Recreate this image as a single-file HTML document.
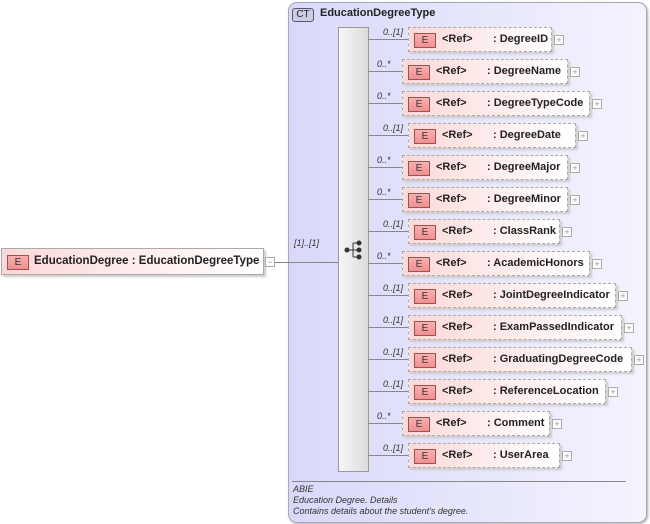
<!DOCTYPE html>
<html><head><style>
body{margin:0;width:650px;height:524px;background:#fff;position:relative;font-family:"Liberation Sans",sans-serif;overflow:hidden}
.a{position:absolute}
.ct{left:288px;top:2px;width:357px;height:519px;border:1px solid #a8a8b8;border-radius:9px;background:linear-gradient(90deg,#d8d8fa,#f4f4fe);box-shadow:1px 1px 2px #aaa}
.seq{left:338px;top:27px;width:29px;height:443px;background:linear-gradient(90deg,#f6f6f6,#dcdcdc);border:1px solid #999}
.box{height:23px;border:1px dashed #aaa;background:linear-gradient(90deg,#fcd8d8,#fff);box-shadow:2px 2px 2px #ccc;font-size:11px;font-weight:bold;color:#222;box-sizing:border-box;height:25px}
.e{position:absolute;left:5px;top:5px;width:20px;height:13px;border:1px solid #a05050;background:linear-gradient(#f8b0b0,#f09090);font-size:10px;font-weight:normal;text-align:center;line-height:13px;color:#333}
.r{position:absolute;left:33px;top:5px}
.n{position:absolute;top:5px;white-space:nowrap}
.pl{width:8px;height:8px;border:1px solid #aaa;background:#fff;font-size:9px;line-height:8px;text-align:center;color:#999}
.m{font-size:9px;font-style:italic;color:#333}
.ln{height:1px;background:#888}
</style></head><body>
<div class="a ct"></div>
<div class="a" style="left:292px;top:8px;width:20px;height:12px;border:1px solid #557;border-radius:3px;background:#ccd;font-size:10px;text-align:center;line-height:12px;color:#224">CT</div>
<div class="a" style="left:320px;top:7px;font-size:11px;font-weight:bold;color:#222">EducationDegreeType</div>
<div class="a seq"></div>
<svg class="a" style="left:344px;top:240px" width="20" height="20"><g stroke="#333" fill="#333"><line x1="2" y1="10" x2="9" y2="10"/><line x1="9" y1="3" x2="9" y2="17"/><line x1="9" y1="3" x2="15" y2="3"/><line x1="9" y1="10" x2="15" y2="10"/><line x1="9" y1="17" x2="15" y2="17"/><circle cx="3" cy="10" r="2"/><circle cx="15" cy="3" r="2"/><circle cx="15" cy="10" r="2"/><circle cx="15" cy="17" r="2"/></g></svg>
<div class="a box" style="left:1px;top:248px;width:263px;height:27px;border:1px solid #aaa"><div class="e" style="top:6px">E</div><div class="n" style="left:32px;top:6px;font-size:11.5px">EducationDegree : EducationDegreeType</div></div>
<div class="a pl" style="left:265px;top:257px">−</div>
<div class="a ln" style="left:275px;top:262px;width:63px"></div>
<div class="a m" style="left:294px;top:238px">[1]..[1]</div>
<div id="rows"></div>
<div class="a ln" style="left:292px;top:481px;width:334px"></div>
<div class="a m" style="left:293px;top:484px;line-height:11px">ABIE<br>Education Degree. Details<br>Contains details about the student's degree.</div>
<script>
var d=[[408,552,"DegreeID","0..[1]"],[402,568,"DegreeName","0..*"],[402,590,"DegreeTypeCode","0..*"],[408,576,"DegreeDate","0..[1]"],[402,568,"DegreeMajor","0..*"],[402,568,"DegreeMinor","0..*"],[408,560,"ClassRank","0..[1]"],[402,590,"AcademicHonors","0..*"],[408,616,"JointDegreeIndicator","0..[1]"],[408,622,"ExamPassedIndicator","0..[1]"],[408,632,"GraduatingDegreeCode","0..[1]"],[408,606,"ReferenceLocation","0..[1]"],[402,550,"Comment","0..*"],[408,560,"UserArea","0..[1]"]];
var h="";
d.forEach(function(r,i){var y=27+i*32;
h+='<div class="a ln" style="left:368px;top:'+(y+12)+'px;width:'+(r[0]-368)+'px"></div>';
h+='<div class="a m" style="left:'+(r[0]-25)+'px;top:'+(y)+'px">'+r[3]+'</div>';
h+='<div class="a box" style="left:'+r[0]+'px;top:'+y+'px;width:'+(r[1]-r[0])+'px"><div class="e">E</div><div class="r">&lt;Ref&gt;</div><div class="n" style="left:84px">: '+r[2]+'</div></div>';
h+='<div class="a pl" style="left:'+(r[1]+2)+'px;top:'+(y+8)+'px">+</div>';});
document.getElementById("rows").innerHTML=h;
</script>
</body></html>
